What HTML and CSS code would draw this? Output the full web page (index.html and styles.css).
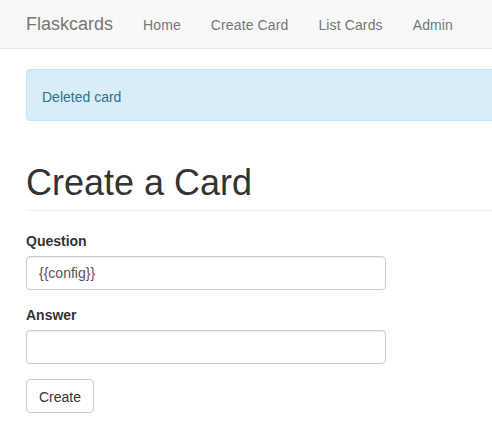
FILE: index.html
```html
<!DOCTYPE html>
<html lang="en">
<head>
<meta charset="utf-8">
<title>Flaskcards</title>
<link rel="stylesheet" href="styles.css">
</head>
<body>
<div class="page">
  <nav class="navbar">
    <a class="brand" href="#">Flaskcards</a>
    <a class="nav-link" href="#">Home</a>
    <a class="nav-link" href="#">Create Card</a>
    <a class="nav-link" href="#">List Cards</a>
    <a class="nav-link" href="#">Admin</a>
  </nav>
  <main class="container">
    <div class="alert">Deleted card</div>
    <div class="page-header">
      <h1>Create a Card</h1>
    </div>
    <form class="form">
      <div class="form-group">
        <label for="q">Question</label>
        <input id="q" class="form-control" type="text" value="{{config}}">
      </div>
      <div class="form-group">
        <label for="a">Answer</label>
        <input id="a" class="form-control" type="text" value="">
      </div>
      <button class="btn" type="button">Create</button>
    </form>
  </main>
</div>
</body>
</html>
```
FILE: styles.css
```css
html, body {
  margin: 0;
  padding: 0;
}
body {
  font-family: "Liberation Sans", Arial, sans-serif;
  font-size: 14px;
  line-height: 1.42857;
  color: #333;
  background: #fff;
}
.page {
  overflow: hidden;
  width: 100%;
  min-height: 447px;
}
.navbar {
  display: flex;
  align-items: flex-start;
  height: 48px;
  background: #f8f8f8;
  border-bottom: 1px solid #e7e7e7;
  margin-bottom: 20px;
}
.brand {
  margin-left: 26px;
  padding: 14px 15px 0 0;
  font-size: 18px;
  line-height: 20px;
  color: #777;
  text-decoration: none;
}
.nav-link {
  padding: 15px 15px 0;
  line-height: 20px;
  letter-spacing: 0.12px;
  color: #777;
  text-decoration: none;
}
.container {
  margin-left: 26px;
  width: 490px;
}
.alert {
  padding: 17px 15px 13px;
  line-height: 20px;
  background: #d9edf7;
  border: 1px solid #bce8f1;
  border-radius: 4px;
  color: #31708f;
  margin-bottom: 20px;
}
.page-header {
  margin: 40px 0 20px;
  padding-top: 2px;
  padding-bottom: 7px;
  border-bottom: 1px solid #eee;
}
.page-header h1 {
  margin: 0;
  font-size: 36px;
  font-weight: 500;
  line-height: 1.1;
  color: #333;
}
.form-group {
  margin-bottom: 15px;
}
.form-group label {
  display: inline-block;
  margin-bottom: 5px;
  font-weight: bold;
  line-height: 20px;
}
.form-control {
  display: block;
  box-sizing: border-box;
  width: 360px;
  height: 34px;
  padding: 6px 12px;
  font-family: inherit;
  font-size: 14px;
  line-height: 1.42857;
  color: #555;
  background: #fff;
  border: 1px solid #ccc;
  border-radius: 4px;
  box-shadow: inset 0 1px 1px rgba(0, 0, 0, 0.075);
  margin: 0;
}
.btn {
  display: inline-block;
  box-sizing: border-box;
  height: 34px;
  padding: 7px 12px 5px;
  font-family: inherit;
  font-size: 14px;
  line-height: 20px;
  color: #333;
  background: #fff;
  border: 1px solid #ccc;
  border-radius: 4px;
  margin: 0;
}
```
